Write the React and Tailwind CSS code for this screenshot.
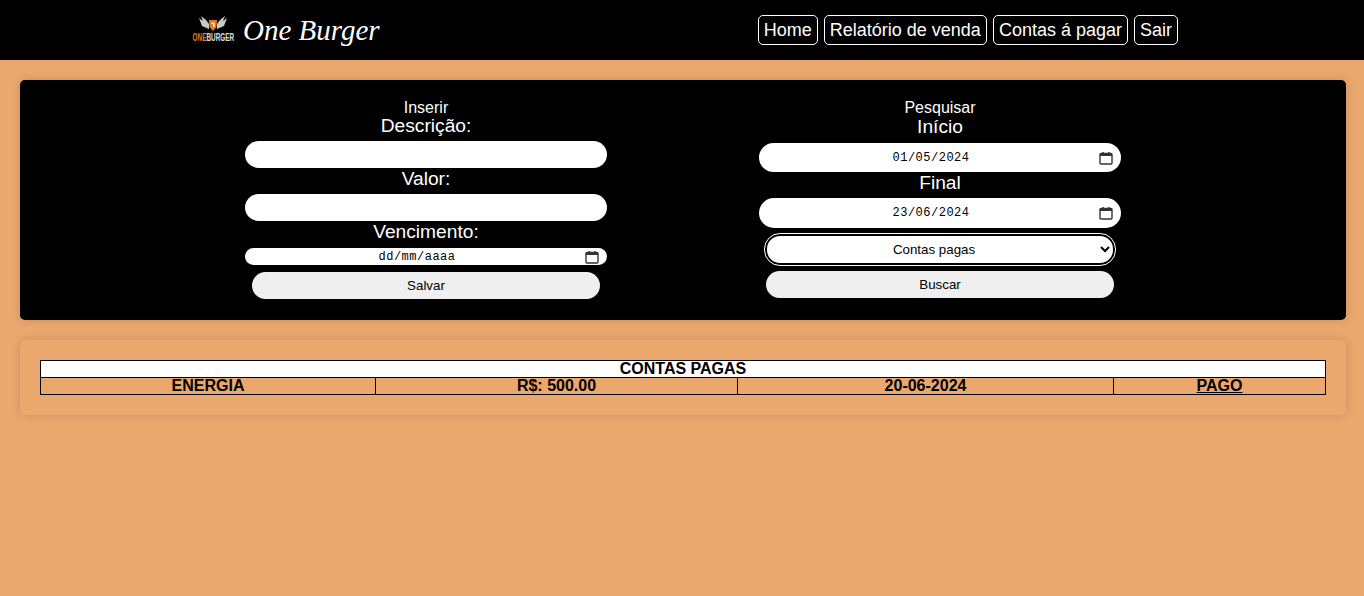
import React from "react";

function CalendarIcon() {
  return (
    <svg width="14" height="14" viewBox="0 0 14 14" className="absolute right-[8px] top-1/2 -translate-y-1/2 text-[#333]">
      <path d="M2 2.5h10a1 1 0 0 1 1 1v8.5a1 1 0 0 1-1 1H2a1 1 0 0 1-1-1V3.5a1 1 0 0 1 1-1z" fill="none" stroke="currentColor" strokeWidth="1.4" />
      <rect x="1" y="2" width="12" height="3" fill="currentColor" />
      <rect x="3.5" y="1" width="1.4" height="2" fill="currentColor" />
      <rect x="9.1" y="1" width="1.4" height="2" fill="currentColor" />
    </svg>
  );
}

function DateField({ value, className }) {
  return (
    <div className={`relative flex items-center justify-center pr-[18px] w-[362px] bg-white rounded-[15px] font-['Liberation_Mono',monospace] text-[12px] tracking-[0.5px] text-black ${className}`}>
      <span>{value}</span>
      <CalendarIcon />
    </div>
  );
}

function Label({ children, className = "" }) {
  return <label className={`block text-[19.2px] leading-[21px] text-white ${className}`}>{children}</label>;
}

function Logo() {
  return (
    <svg width="42" height="30" viewBox="0 0 42 30" className="shrink-0">
      {/* asas */}
      <path d="M17 14 L10 11 L7 3 L11 6 L9 1 L14 5 L17 9 Z" fill="#c9c9c9" />
      <path d="M25 14 L32 11 L35 3 L31 6 L33 1 L28 5 L25 9 Z" fill="#c9c9c9" />
      {/* escudo */}
      <path d="M17 5 H25 L24.5 12 L21 16 L17.5 12 Z" fill="#e8791a" />
      <path d="M19.5 7.5 H22.5 V12 H21 V9 H19.5 Z" fill="#fff" />
      <g transform="scale(0.58 1)" fontFamily="'Liberation Sans', sans-serif" fontSize="11" fontWeight="700">
        <text x="1" y="26" fill="#e8791a">ONE</text>
        <text x="25" y="26" fill="#e0e0e0">BURGER</text>
      </g>
    </svg>
  );
}

const links = ["Home", "Relatório de venda", "Contas á pagar", "Sair"];

export default function App() {
  return (
    <div className="min-h-[596px] bg-[#eaa76e] font-['Liberation_Sans',Arial,sans-serif] text-black">
      {/* nav */}
      <header className="h-[60px] bg-black flex items-center justify-between pl-[192px] pr-[186px]">
        <div className="flex items-center gap-[9px]">
          <Logo />
          <span className="[font-family:cursive] italic text-[29px] leading-none text-white">One Burger</span>
        </div>
        <nav className="flex gap-[6px] -mt-[1px]">
          {links.map((l) => (
            <a key={l} href="#" className="h-[30px] px-[5px] border border-white rounded-[5px] text-white text-[18px] leading-[29px]">
              {l}
            </a>
          ))}
        </nav>
      </header>

      {/* formularios */}
      <section className="ml-5 mr-[18px] mt-5 h-[240px] bg-black rounded-[5px] flex pl-[149px] pt-[19px] text-center shadow-[0_0_10px_rgba(0,0,0,0.15)]">
        <form className="w-[514px] flex flex-col items-center">
          <div className="text-white text-[16px] leading-[18px]">Inserir</div>
          <Label className="-mt-[2px]">Descrição:</Label>
          <input className="mt-[5px] w-[362px] h-[27px] bg-white rounded-[15px] outline-none" />
          <Label>Valor:</Label>
          <input className="mt-[5px] w-[362px] h-[27px] bg-white rounded-[15px] outline-none" />
          <Label>Vencimento:</Label>
          <DateField value="dd/mm/aaaa" className="mt-[6px] h-[17px]" />
          <button type="button" className="mt-[7px] w-[348px] h-[27px] bg-[#efefef] rounded-[15px] text-[13.33px] text-black">Salvar</button>
        </form>

        <form className="w-[514px] flex flex-col items-center">
          <div className="text-white text-[16px] leading-[18px]">Pesquisar</div>
          <Label className="-mt-[1px]">Início</Label>
          <DateField value="01/05/2024" className="mt-[6px] h-[29px]" />
          <Label>Final</Label>
          <DateField value="23/06/2024" className="mt-[5px] h-[30px]" />
          <select className="mt-[6px] w-[350px] h-[31px] bg-white rounded-[15px] border-2 border-black outline-1 outline-white text-center text-[13.33px] text-black font-['Liberation_Sans',sans-serif]">
            <option>Contas pagas</option>
          </select>
          <button type="button" className="mt-[6px] w-[348px] h-[27px] bg-[#efefef] rounded-[15px] text-[13.33px] text-black">Buscar</button>
        </form>
      </section>

      {/* tabela */}
      <section className="ml-5 mr-[18px] mt-5 h-[75px] p-5 rounded-[5px] bg-[#eaa76e] shadow-[0_0_10px_rgba(0,0,0,0.15)]">
        <table className="w-full border-collapse table-fixed text-[16px] leading-[16px] font-bold text-center">
          <colgroup>
            <col className="w-[335px]" />
            <col className="w-[362px]" />
            <col className="w-[376px]" />
            <col />
          </colgroup>
          <thead>
            <tr className="bg-white">
              <th colSpan="4" className="border border-black h-[17px] p-0">CONTAS PAGAS</th>
            </tr>
          </thead>
          <tbody>
            <tr>
              <td className="border border-black h-[17px] p-0">ENERGIA</td>
              <td className="border border-black p-0">R$: 500.00</td>
              <td className="border border-black p-0">20-06-2024</td>
              <td className="border border-black p-0"><a href="#" className="underline">PAGO</a></td>
            </tr>
          </tbody>
        </table>
      </section>
    </div>
  );
}
